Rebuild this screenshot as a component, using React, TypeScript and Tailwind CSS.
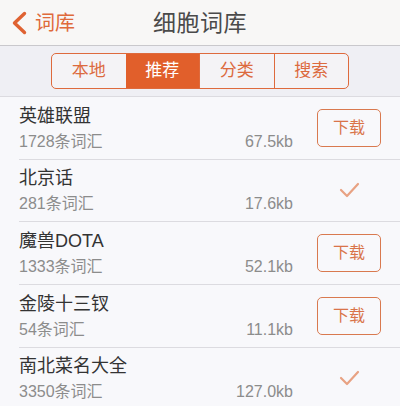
import React from "react";

const font = { fontFamily: '"Liberation Sans", "Noto Sans CJK SC", sans-serif' };

type Item = { title: string; count: string; size: string; downloaded: boolean };

const items: Item[] = [
  { title: "英雄联盟", count: "1728条词汇", size: "67.5kb", downloaded: false },
  { title: "北京话", count: "281条词汇", size: "17.6kb", downloaded: true },
  { title: "魔兽DOTA", count: "1333条词汇", size: "52.1kb", downloaded: false },
  { title: "金陵十三钗", count: "54条词汇", size: "11.1kb", downloaded: false },
  { title: "南北菜名大全", count: "3350条词汇", size: "127.0kb", downloaded: true },
];

const tabs = ["本地", "推荐", "分类", "搜索"];

function Row({ item }: { item: Item }) {
  return (
    <div className="h-[62.67px] pl-[19px]">
      <div className="h-full flex items-center pr-[19px] border-b border-[#dcdbe0]">
        <div className="w-[274px] flex flex-col gap-[5px] pt-[1px]">
          <div className="text-[18px] leading-[22px] text-[#333333] whitespace-nowrap">{item.title}</div>
          <div className="flex justify-between text-[16px] leading-[20px] text-[#8c8c8c] whitespace-nowrap">
            <span>{item.count}</span>
            <span>{item.size}</span>
          </div>
        </div>
        <div className="ml-[24px] w-[64px] flex items-center justify-center">
          {item.downloaded ? (
            <svg width="21" height="16" viewBox="0 0 21 16" fill="none">
              <path d="M2 8 L8 14 L19 2" stroke="#e8a283" strokeWidth="2.2" strokeLinecap="round" strokeLinejoin="round" />
            </svg>
          ) : (
            <div className="w-[64px] h-[38px] rounded-[5px] border-[1.5px] border-[#d9794f] flex items-center justify-center text-[16px] text-[#d9744a]">
              下载
            </div>
          )}
        </div>
      </div>
    </div>
  );
}

export default function App() {
  return (
    <div className="w-[400px] h-[406px] overflow-hidden bg-[#f8f8fb]" style={font}>
      <div className="h-[46px] grid grid-cols-[1fr_auto_1fr] items-center bg-[#f8f7f6] border-b border-[#c9c8cc]">
        <div className="flex items-center pl-[11px] text-[#df6a3b]">
          <svg width="17" height="24" viewBox="0 0 17 24" fill="none">
            <path d="M13.5 2.5 L3.5 12 L13.5 21.5" stroke="#df6232" strokeWidth="3.4" strokeLinecap="round" strokeLinejoin="round" />
          </svg>
          <span className="ml-[7px] text-[20px] leading-[24px]">词库</span>
        </div>
        <div className="text-[23px] leading-[28px] text-[#4a4a4a] tracking-[0.5px]">细胞词库</div>
        <div />
      </div>
      <div className="h-[51px] flex items-center justify-center bg-[#efeff4] border-b border-[#dcdbe0]">
        <div className="w-[298px] h-[36px] flex rounded-[5px] border border-[#de6a3d] overflow-hidden bg-[#f4f3f6]">
          {tabs.map((t, i) => (
            <div
              key={t}
              className={
                "flex-1 flex items-center justify-center text-[17px] " +
                (i === 1 ? "bg-[#e15f2b] text-white" : "text-[#dc6a3e]") +
                (i > 1 ? " border-l border-[#de6a3d]" : "")
              }
            >
              {t}
            </div>
          ))}
        </div>
      </div>
      <div>
        {items.map((it) => (
          <Row key={it.title} item={it} />
        ))}
      </div>
    </div>
  );
}
